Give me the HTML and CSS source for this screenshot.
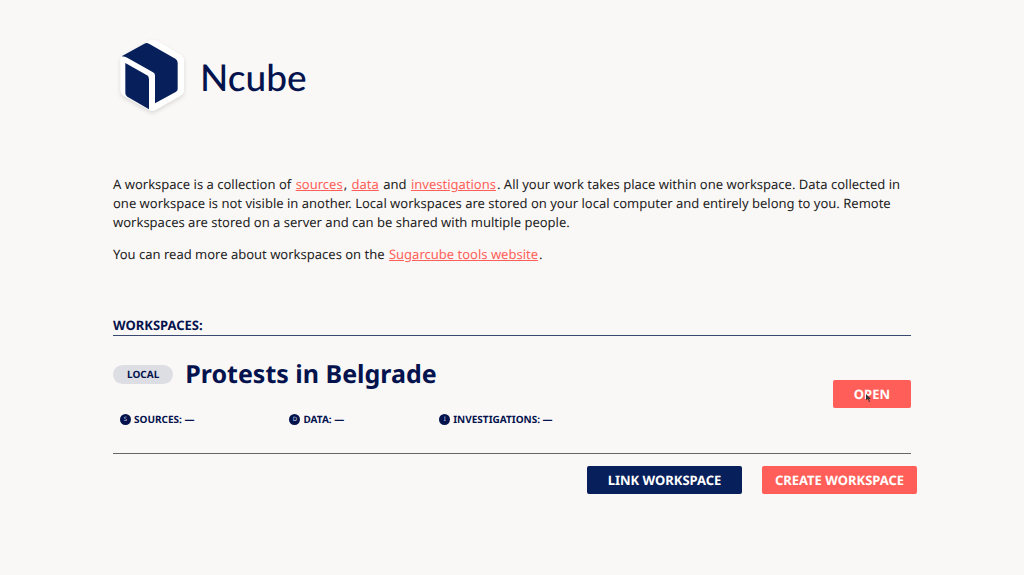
FILE: index.html
```html
<!DOCTYPE html>
<html lang="en">
<head>
<meta charset="utf-8">
<meta name="viewport" content="width=device-width, initial-scale=1">
<title>Ncube</title>
<link rel="stylesheet" href="styles.css">
</head>
<body>
<div class="page">
  <header class="brand">
    <svg class="brand-mark" viewBox="33 21 216 240" aria-hidden="true">
      <path class="mark-shell" d="M54 78L126 36Q142 24 158 34L227 74Q237 80 237 92V180Q237 191 227 197L153 239Q141 246 130 239L56 197Q46 191 46 180V88Q46 82 54 78Z"/>
      <path class="mark-face" d="M50 79L118 41Q125 37 132 41L211 86Q218 90 218 98V177Q218 183 212 186L150 220V136Q150 130 144 127L68 84Q61 79 50 79Z"/>
      <path class="mark-face" d="M61 99L126 136Q132 140 132 147V238L67 200Q61 196 61 189Z"/>
    </svg>
    <span class="brand-name">Ncube</span>
  </header>
  <main>
    <section class="intro">
      <p>A workspace is a collection of <a class="link" href="#">sources</a>, <a class="link" href="#">data</a> and <a class="link" href="#">investigations</a>. All your work takes place within one workspace. Data collected in one workspace is not visible in another. Local workspaces are stored on your local computer and entirely belong to you. Remote workspaces are stored on a server and can be shared with multiple people.</p>
      <p>You can read more about workspaces on the <a class="link" href="#">Sugarcube tools website</a>.</p>
    </section>
    <h2 class="section-title">Workspaces:</h2>
    <article class="workspace">
      <div class="workspace-info">
        <div class="workspace-head">
          <span class="tag">Local</span>
          <h3 class="workspace-name">Protests in Belgrade</h3>
        </div>
        <ul class="stats">
          <li class="stat"><span class="dot">S</span>Sources: —</li>
          <li class="stat"><span class="dot">D</span>Data: —</li>
          <li class="stat"><span class="dot">I</span>Investigations: —</li>
        </ul>
      </div>
      <button class="btn btn-open" type="button">Open<svg class="pointer" viewBox="0 0 5 8" aria-hidden="true"><path d="M0 0L5 5H3L4 8H3L2 5L0 6Z"/></svg></button>
    </article>
    <div class="actions">
      <button class="btn btn-wide btn-dark" type="button">Link Workspace</button>
      <button class="btn btn-wide" type="button">Create Workspace</button>
    </div>
  </main>
</div>
</body>
</html>
```
FILE: styles.css
```css
:root {
  --navy: #04134d;
  --fill: #071f5a;
  --coral: #ff5f58;
  --paper: #faf8f7;
}
* { box-sizing: border-box; }
body {
  margin: 0;
  background: var(--paper);
  color: #222;
  font: 13px/19px "Noto Sans", sans-serif;
  text-rendering: geometricPrecision;
}
.page { padding: 37px 113px 40px; }
.brand {
  display: flex;
  align-items: center;
  gap: 12px;
  padding-left: 3px;
}
.brand-mark {
  width: 72px;
  height: 80px;
  overflow: visible;
  filter: drop-shadow(0 2px 2px rgba(0, 0, 0, 0.12));
}
.mark-shell { fill: #fff; }
.mark-face { fill: var(--fill); }
.brand-name {
  color: var(--navy);
  font: 500 37px/48px Lato, sans-serif;
}
.intro { padding-top: 58px; }
.intro p { margin: 0 0 13px; }
.link {
  padding: 0 1px;
  color: var(--coral);
  text-decoration: underline;
}
.section-title {
  margin: 52px 0 0;
  border-bottom: 1px solid #39496f;
  color: var(--navy);
  font-size: 13px;
  line-height: 19px;
  text-transform: uppercase;
}
.workspace {
  display: flex;
  align-items: center;
  justify-content: space-between;
  padding: 20px 0 24px;
  border-bottom: 1px solid #666;
}
.workspace-info { color: var(--navy); }
.workspace-head {
  display: flex;
  align-items: center;
  gap: 12px;
}
.tag {
  padding: 0 14px;
  border-radius: 10px;
  background: #dddee4;
  font-size: 10px;
  font-weight: 700;
  text-transform: uppercase;
}
.workspace-name {
  margin: 0;
  font-size: 25px;
  line-height: 36px;
}
.stats {
  display: flex;
  gap: 95px;
  margin: 18px 0 0;
  padding: 0 0 0 7px;
  list-style: none;
}
.stat {
  display: flex;
  align-items: center;
  gap: 3px;
  font-size: 10px;
  font-weight: 700;
  text-transform: uppercase;
}
.dot {
  width: 11px;
  height: 11px;
  border-radius: 50%;
  background: var(--navy);
  color: #d5daea;
  font-size: 6px;
  font-weight: 400;
  line-height: 11px;
  text-align: center;
}
.btn {
  position: relative;
  height: 28px;
  padding: 0 20px;
  border: 0;
  border-radius: 2px;
  background: var(--coral);
  color: #fff;
  font: 700 13px/20px "Noto Sans", sans-serif;
  text-rendering: inherit;
  text-transform: uppercase;
  cursor: pointer;
}
.btn-open { margin-top: 2px; padding: 0 21px; }
.btn-wide { width: 155px; padding: 0; }
.btn-dark { background: var(--fill); }
.pointer {
  position: absolute;
  top: 14px;
  left: 33px;
  width: 5px;
  height: 8px;
  fill: #333;
}
.actions {
  display: flex;
  justify-content: flex-end;
  gap: 20px;
  margin: 12px -6px 0 0;
}
```
